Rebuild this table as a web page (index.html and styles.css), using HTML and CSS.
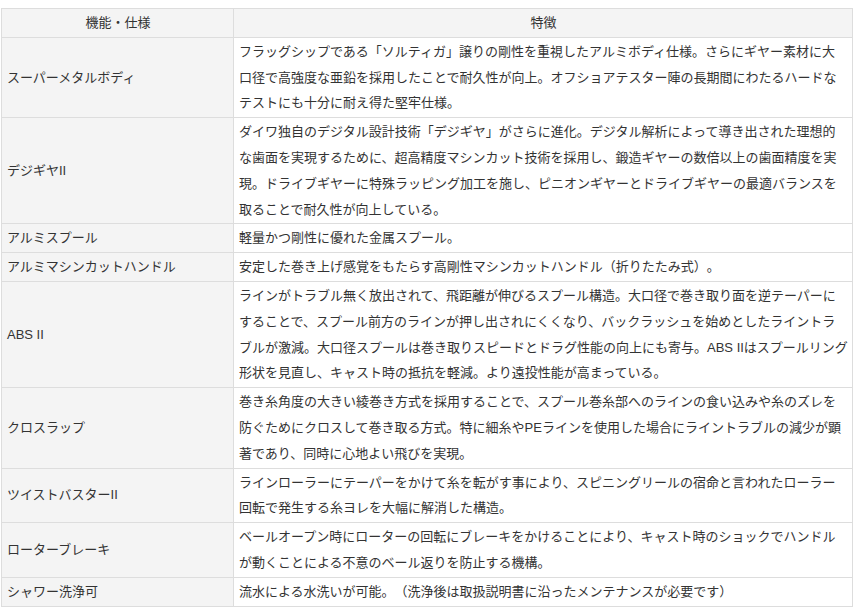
FILE: index.html
```html
<!DOCTYPE html>
<html lang="ja">
<head>
<meta charset="utf-8">
<link rel="stylesheet" href="styles.css">
</head>
<body>
<table class="spec">
  <thead>
    <tr><th class="col-name">機能・仕様</th><th class="col-desc">特徴</th></tr>
  </thead>
  <tbody>
    <tr><th>スーパーメタルボディ</th><td>フラッグシップである「ソルティガ」譲りの剛性を重視したアルミボディ仕様。さらにギヤー素材に大口径で高強度な亜鉛を採用したことで耐久性が向上。オフショアテスター陣の長期間にわたるハードなテストにも十分に耐え得た堅牢仕様。</td></tr>
    <tr><th>デジギヤII</th><td>ダイワ独自のデジタル設計技術「デジギヤ」がさらに進化。デジタル解析によって導き出された理想的な歯面を実現するために、超高精度マシンカット技術を採用し、鍛造ギヤーの数倍以上の歯面精度を実現。ドライブギヤーに特殊ラッピング加工を施し、ピニオンギヤーとドライブギヤーの最適バランスを取ることで耐久性が向上している。</td></tr>
    <tr><th>アルミスプール</th><td>軽量かつ剛性に優れた金属スプール。</td></tr>
    <tr><th>アルミマシンカットハンドル</th><td>安定した巻き上げ感覚をもたらす高剛性マシンカットハンドル（折りたたみ式）。</td></tr>
    <tr><th>ABS II</th><td>ラインがトラブル無く放出されて、飛距離が伸びるスプール構造。大口径で巻き取り面を逆テーパーにすることで、スプール前方のラインが押し出されにくくなり、バックラッシュを始めとしたライントラブルが激減。大口径スプールは巻き取りスピードとドラグ性能の向上にも寄与。ABS IIはスプールリング形状を見直し、キャスト時の抵抗を軽減。より遠投性能が高まっている。</td></tr>
    <tr><th>クロスラップ</th><td>巻き糸角度の大きい綾巻き方式を採用することで、スプール巻糸部へのラインの食い込みや糸のズレを防ぐためにクロスして巻き取る方式。特に細糸やPEラインを使用した場合にライントラブルの減少が顕著であり、同時に心地よい飛びを実現。</td></tr>
    <tr><th>ツイストバスターII</th><td>ラインローラーにテーパーをかけて糸を転がす事により、スピニングリールの宿命と言われたローラー回転で発生する糸ヨレを大幅に解消した構造。</td></tr>
    <tr><th>ローターブレーキ</th><td>ベールオープン時にローターの回転にブレーキをかけることにより、キャスト時のショックでハンドルが動くことによる不意のベール返りを防止する機構。</td></tr>
    <tr><th>シャワー洗浄可</th><td>流水による水洗いが可能。（洗浄後は取扱説明書に沿ったメンテナンスが必要です）</td></tr>
  </tbody>
</table>
</body>
</html>
```
FILE: styles.css
```css
html, body {
  background: #ffffff;
}
body {
  margin: 8px 0 0 1px;
  font-family: "Liberation Sans", "Noto Sans CJK JP", sans-serif;
  font-size: 13px;
  color: #333333;
  text-spacing-trim: space-all;
}
.spec {
  width: 852px;
  border-collapse: collapse;
  table-layout: fixed;
}
.spec th,
.spec td {
  border: 1px solid #dddddd;
  padding: 1px 4px 1px 5px;
  line-height: 25.8px;
  font-weight: normal;
  vertical-align: middle;
}
.spec .col-name {
  width: 232px;
  box-sizing: border-box;
}
.spec thead th {
  background: #f4f4f4;
  text-align: center;
}
.spec tbody th {
  background: #f4f4f4;
  text-align: left;
}
.spec tbody td {
  background: #ffffff;
  text-align: left;
}
```
